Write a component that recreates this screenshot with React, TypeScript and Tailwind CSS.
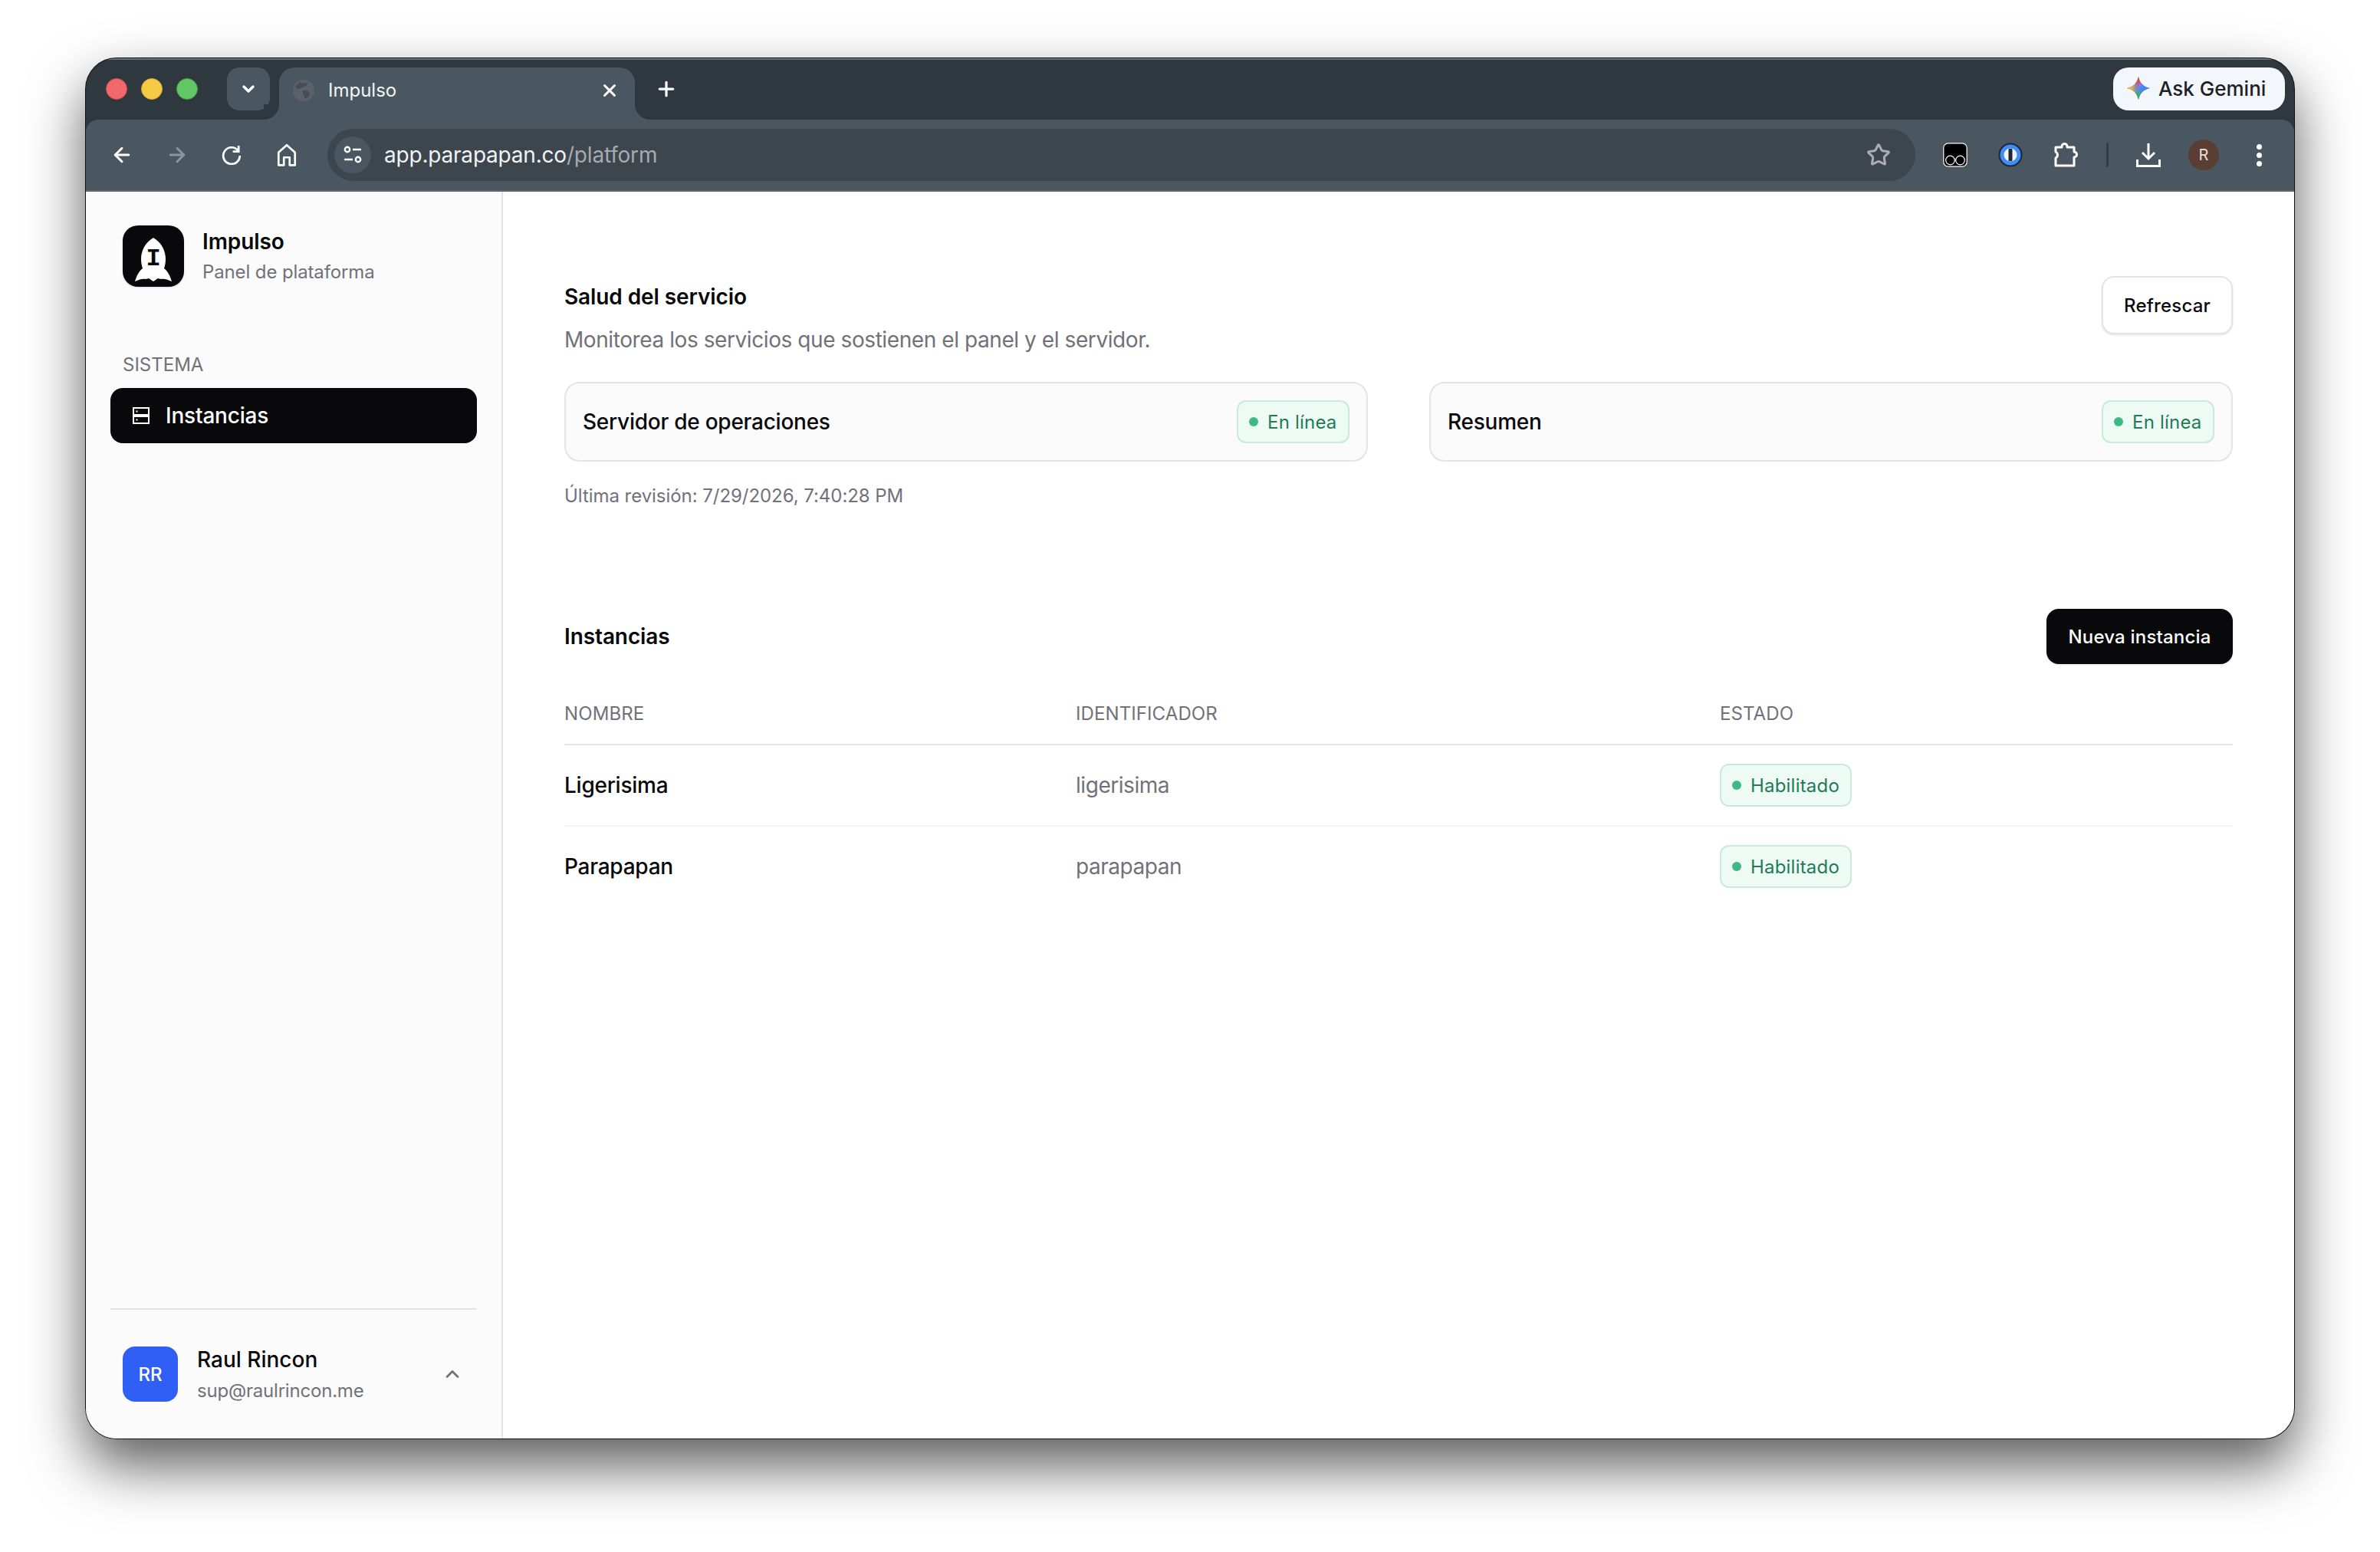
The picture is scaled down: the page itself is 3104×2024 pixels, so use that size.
import React from "react";
import { ArrowLeft, ArrowRight, ChevronDown, ChevronUp, Plus, Star, X } from "lucide-react";

const Badge = ({ label }: { label: string }) => (
  <span className="inline-flex h-[56px] items-center gap-[12px] rounded-[12px] border-2 border-[#c8ead9] bg-[#eefbf4] pl-[14px] pr-[14.5px] text-[24px] tracking-[0.2px] text-[#237a57]">
    <span className="h-[12px] w-[12px] rounded-full bg-[#3fb984]" />
    <span className="pt-[1px]">{label}</span>
  </span>
);

const HealthCard = ({ name }: { name: string }) => (
  <div className="flex h-[104px] flex-1 items-center justify-between rounded-[20px] border-2 border-[#e4e4e7] bg-[#fafafa] px-[22px]">
    <span className="text-[28px] font-medium tracking-[-0.25px] text-[#09090b]">{name}</span>
    <Badge label="En línea" />
  </div>
);

const Row = ({ name, id, last }: { name: string; id: string; last?: boolean }) => (
  <div className={`grid grid-cols-[667px_840px_1fr] items-center py-[24px] ${last ? "" : "border-b-2 border-[#f4f4f5]"}`}>
    <span className="text-[28px] font-medium tracking-[-0.25px] text-[#09090b]">{name}</span>
    <span className="text-[28px] tracking-[-0.45px] text-[#71717a]">{id}</span>
    <div>
      <Badge label="Habilitado" />
    </div>
  </div>
);

const Gemini = () => (
  <svg width="32" height="32" viewBox="0 0 32 32">
    <defs>
      <clipPath id="spark">
        <path d="M16 1Q18.5 13.5 31 16Q18.5 18.5 16 31Q13.5 18.5 1 16Q13.5 13.5 16 1Z" />
      </clipPath>
      <filter id="soft">
        <feGaussianBlur stdDeviation="2.2" />
      </filter>
    </defs>
    <g clipPath="url(#spark)">
      <rect width="32" height="32" fill="#6f86e0" />
      <g filter="url(#soft)">
        <rect x="9" y="-4" width="14" height="15" fill="#e0483f" />
        <rect x="-4" y="9" width="14" height="14" fill="#f7b52c" />
        <rect x="19" y="8" width="17" height="16" fill="#3f86fa" />
        <rect x="9" y="21" width="14" height="15" fill="#2fae60" />
      </g>
    </g>
  </svg>
);

export default function App() {
  return (
    <div className="h-[2024px] w-[3104px] overflow-hidden bg-white pl-[112px] pt-[76px] font-['Inter',sans-serif]">
      <div className="flex h-[1800px] w-[2880px] flex-col overflow-hidden rounded-[40px] bg-[#2f373f] shadow-[0_0_0_1px_#111,0_35px_75px_rgba(0,0,0,0.65)]">
        {/* Title bar */}
        <div className="flex h-[80px] shrink-0 items-start pt-[12px] shadow-[inset_0_2px_0_#6b7278]">
          <div className="flex h-[56px] w-[184px] shrink-0 items-center gap-[18px] pl-[26px]">
            <span className="h-[28px] w-[28px] rounded-full border border-[#d9484b] bg-[#f0686b]" />
            <span className="h-[28px] w-[28px] rounded-full border border-[#d9a92f] bg-[#f4ca42]" />
            <span className="h-[28px] w-[28px] rounded-full border border-[#3ea646] bg-[#62c566]" />
          </div>
          <div className="flex h-[56px] w-[56px] items-center justify-center rounded-[16px] bg-[#4a5660] text-white">
            <ChevronDown size={24} strokeWidth={3.4} />
          </div>
          <div className="relative ml-[12px] flex h-[68px] w-[464px] items-center rounded-t-[20px] bg-[#4a5660] pb-[8px] pl-[18px] pr-[20px] text-white">
            <div className="absolute -left-[20px] bottom-0 h-[20px] w-[20px] bg-[radial-gradient(circle_at_0_0,#2f373f_19.5px,#4a5660_20.5px)]" />
            <div className="absolute -right-[20px] bottom-0 h-[20px] w-[20px] bg-[radial-gradient(circle_at_100%_0,#2f373f_19.5px,#4a5660_20.5px)]" />
            <svg width="28" height="28" viewBox="0 0 28 28">
              <circle cx="14" cy="14" r="14" fill="#5b6167" />
              <path d="M9 3C12 5 17 5 20 3L17 8C15 10 11 9 9 12C7 13 4 11 3 9ZM13 14C17 13 21 15 22 18C21 22 18 24 15 25C16 21 12 19 13 14Z" fill="#454c53" />
            </svg>
            <span className="ml-[18px] flex-1 text-[24px] leading-[32px] text-[#f1f3f4]">Impulso</span>
            <X size={26} strokeWidth={2.8} />
          </div>
          <div className="ml-[26px] flex h-[56px] items-center text-white">
            <Plus size={30} strokeWidth={2.6} />
          </div>
          <div className="ml-auto mr-[12px] flex h-[56px] w-[224px] items-center gap-[10px] rounded-[20px] bg-[#f3f7fc] pb-[2px] pl-[17px] text-[26px] font-medium text-[#1c2127]">
            <Gemini />
            Ask Gemini
          </div>
        </div>

        {/* Toolbar */}
        <div className="flex h-[94px] shrink-0 items-start rounded-t-[16px] border-b-2 border-[#5c6871] bg-[#4a5660] pt-[12px]">
          <div className="flex h-[68px] w-[315px] shrink-0 items-center pl-[32px] text-white">
            <ArrowLeft size={30} strokeWidth={2.4} />
            <ArrowRight size={30} strokeWidth={2.4} className="ml-[42px] text-[#8b959d]" />
            <svg width="26" height="26" viewBox="0 0 24 24" fill="none" stroke="white" strokeWidth="2.5" className="ml-[43px]">
              <path d="M20 7A10 10 0 1 0 22 13" />
              <path d="M20.5 1V8H13.5" />
            </svg>
            <svg width="26" height="30" viewBox="0 0 24 28" fill="none" stroke="white" strokeWidth="2.5" className="ml-[46px]">
              <path d="M2 26.5V11L12 2L22 11V26.5H15.5V17H8.5V26.5Z" strokeLinejoin="round" />
            </svg>
          </div>
          <div className="flex h-[68px] w-[2071px] shrink-0 items-center rounded-full bg-[#3d454d] pl-[9px] pr-[32px]">
            <div className="flex h-[48px] w-[48px] items-center justify-center rounded-full bg-[#4a5660]">
              <svg width="26" height="26" viewBox="0 0 26 26" fill="none" stroke="white" strokeWidth="2.4">
                <circle cx="6" cy="6" r="3.2" />
                <path d="M13 6H24" />
                <path d="M2 19H13" />
                <circle cx="20" cy="19" r="3.2" />
              </svg>
            </div>
            <span className="ml-[17px] flex-1 text-[28px] leading-[36px] tracking-[-0.2px] text-[#f1f3f4]">
              app.parapapan.co<span className="text-[#a5abb0]">/platform</span>
            </span>
            <Star size={32} strokeWidth={2.3} className="text-[#a8adb1]" />
          </div>
          <div className="flex h-[68px] flex-1 items-center">
            {/* extension: glasses */}
            <svg width="32" height="32" viewBox="0 0 32 32" className="ml-[36px]">
              <rect x="0.8" y="0.8" width="30.4" height="30.4" rx="6" fill="#000" stroke="white" strokeWidth="1.2" />
              <circle cx="9.5" cy="23" r="5.8" fill="none" stroke="white" strokeWidth="1.2" />
              <circle cx="22.5" cy="23" r="5.8" fill="none" stroke="white" strokeWidth="1.2" />
            </svg>
            {/* extension: password manager */}
            <svg width="32" height="32" viewBox="0 0 32 32" className="ml-[40px]">
              <circle cx="16" cy="16" r="15.5" fill="#1f2733" />
              <circle cx="16" cy="16" r="13.5" fill="#3f8ef5" />
              <circle cx="16" cy="16" r="8.5" fill="#eef3f8" />
              <rect x="13.5" y="8" width="5" height="16" rx="1" fill="#1f2733" />
            </svg>
            <svg width="34" height="34" viewBox="0 0 34 34" fill="none" stroke="white" strokeWidth="3" strokeLinejoin="round" className="ml-[40px]">
              <path d="M3 7H11V6A3.5 3.5 0 0 1 18 6V7H27V13A3.5 3.5 0 0 1 27 20V31H3V21A4.5 4.5 0 0 0 3 13Z" />
            </svg>
            <div className="ml-[35px] h-[32px] w-[3px] rounded-full bg-[#343c44]" />
            <svg width="32" height="32" viewBox="0 0 32 32" fill="none" stroke="white" strokeWidth="3" className="ml-[36px]">
              <path d="M16 1V21" />
              <path d="M8 13L16 21L24 13" />
              <path d="M1.5 22V30.5H30.5V22" />
            </svg>
            <div className="ml-[36px] flex h-[40px] w-[40px] items-center justify-center rounded-full bg-[#5a3d33] text-[20px] text-[#eadfdb]">
              R
            </div>
            <div className="ml-[49px] flex flex-col gap-[4px]">
              <span className="h-[7px] w-[7px] rounded-full bg-white" />
              <span className="h-[7px] w-[7px] rounded-full bg-white" />
              <span className="h-[7px] w-[7px] rounded-full bg-white" />
            </div>
          </div>
        </div>

        {/* Page */}
        <div className="flex min-h-0 flex-1 bg-white">
          <aside className="flex w-[544px] shrink-0 flex-col border-r-2 border-[#e4e4e7] bg-[#fbfbfb] px-[32px] pb-[48px] pt-[44px]">
            <div className="flex items-center gap-[24px] pl-[16px]">
              <div className="h-[80px] w-[80px] shrink-0 rounded-[20px] bg-[#09090b] shadow-sm">
                <svg width="80" height="80" viewBox="0 0 80 80">
                  <path
                    d="M40 16C50 22 56 32 56 44C56 49 55 53 54 56C59 60 62 66 64 73C58 70 53 69 50 70L46 69L40 73L34 69L30 70C27 69 22 70 16 73C18 66 21 60 26 56C25 53 24 49 24 44C24 32 30 22 40 16Z"
                    fill="white"
                  />
                  <text x="40" y="52" textAnchor="middle" fontFamily="'Liberation Mono', monospace" fontWeight="700" fontSize="32" fill="#09090b">
                    I
                  </text>
                </svg>
              </div>
              <div className="flex flex-col gap-[6px]">
                <span className="text-[28px] font-semibold leading-[36px] tracking-[-0.1px] text-[#09090b]">Impulso</span>
                <span className="text-[24px] leading-[32px] tracking-[-0.12px] text-[#71717a]">Panel de plataforma</span>
              </div>
            </div>
            <div className="mt-[86px] pl-[16px] text-[24px] leading-[32px] text-[#71717a]">SISTEMA</div>
            <div className="mt-[14px] flex h-[72px] items-center rounded-[16px] bg-[#09090b] pl-[29px] text-[28px] font-medium tracking-[-0.2px] text-white">
              <svg width="22" height="22" viewBox="0 0 22 22" fill="none" stroke="white" strokeWidth="2">
                <rect x="1" y="1" width="20" height="9" />
                <rect x="1" y="12" width="20" height="9" />
                <path d="M4.5 5.5H6.5M4.5 16.5H6.5" />
              </svg>
              <span className="ml-[21px]">Instancias</span>
            </div>
            <div className="mt-auto border-t-2 border-[#e4e4e7] pt-[48px]">
              <div className="flex items-center pl-[16px]">
                <div className="flex h-[72px] w-[72px] shrink-0 items-center justify-center rounded-[16px] bg-[#2f5ff5] pt-[2px] text-[24px] font-medium text-white">
                  RR
                </div>
                <div className="-my-[2px] ml-[25px] flex flex-1 flex-col gap-[7px]">
                  <span className="text-[28px] font-medium leading-[36px] text-[#09090b]">Raul Rincon</span>
                  <span className="text-[24px] leading-[32px] tracking-[-0.2px] text-[#71717a]">sup@raulrincon.me</span>
                </div>
                <ChevronUp size={28} strokeWidth={2.4} className="mr-[18px] text-[#71717a]" />
              </div>
            </div>
          </aside>

          <main className="flex-1 px-[80px] pt-[110px]">
            <div className="flex items-start justify-between">
              <div className="pt-[7px]">
                <h2 className="text-[28px] font-semibold leading-[40px] tracking-[-0.1px] text-[#09090b]">Salud del servicio</h2>
                <p className="mt-[16px] text-[28px] leading-[40px] tracking-[-0.42px] text-[#71717a]">
                  Monitorea los servicios que sostienen el panel y el servidor.
                </p>
              </div>
              <button className="h-[76px] w-[171px] rounded-[16px] border-2 border-[#e4e4e7] bg-white pt-[2px] text-[24px] font-medium tracking-[0.2px] text-[#09090b] shadow-sm">
                Refrescar
              </button>
            </div>
            <div className="mt-[35px] flex gap-[80px]">
              <HealthCard name="Servidor de operaciones" />
              <HealthCard name="Resumen" />
            </div>
            <p className="mt-[29px] text-[24px] leading-[32px] tracking-[-0.05px] text-[#71717a]">Última revisión: 7/29/2026, 7:40:28 PM</p>

            <div className="mt-[131px] flex items-center justify-between">
              <h2 className="text-[28px] font-semibold leading-[40px] tracking-[-0.1px] text-[#09090b]">Instancias</h2>
              <button className="h-[72px] w-[243px] rounded-[16px] bg-[#09090b] pt-[1px] text-[24px] font-medium tracking-[0.2px] text-white shadow-sm">
                Nueva instancia
              </button>
            </div>
            <div className="mt-[49px] grid grid-cols-[667px_840px_1fr] border-b-2 border-[#e4e4e7] pb-[23px] text-[24px] leading-[32px] tracking-[0.1px] text-[#71717a]">
              <span>NOMBRE</span>
              <span>IDENTIFICADOR</span>
              <span>ESTADO</span>
            </div>
            <Row name="Ligerisima" id="ligerisima" />
            <Row name="Parapapan" id="parapapan" last />
          </main>
        </div>
      </div>
    </div>
  );
}
